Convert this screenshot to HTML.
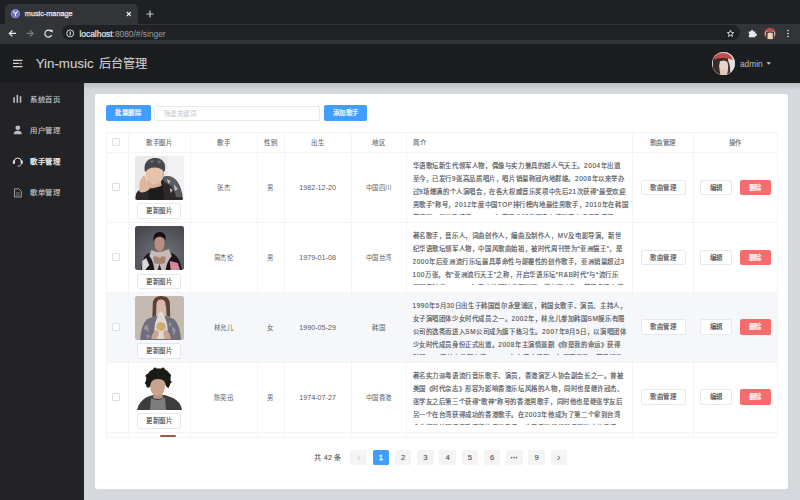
<!DOCTYPE html>
<html lang="zh-CN"><head><meta charset="utf-8">
<style>
*{margin:0;padding:0;box-sizing:border-box}
html,body{width:800px;height:500px;overflow:hidden;background:#d5d9dd;font-family:"Liberation Sans",sans-serif}
.a{position:absolute}
#tabstrip{left:0;top:0;width:800px;height:24px;background:#1f2023}
#tab{left:5px;top:4.4px;width:133px;height:20px;background:#333438;border-radius:5px 5px 0 0}
#toolbar{left:0;top:23.5px;width:800px;height:20.1px;background:#333438}
#omni{left:61.5px;top:25.3px;width:678px;height:15.2px;background:#202124;border-radius:8px}
#hdr{left:0;top:43.6px;width:800px;height:39.4px;background:#1c1d1f}
#side{left:0;top:83px;width:83.7px;height:418px;background:#232325}
#card{left:95px;top:94.3px;width:693.4px;height:394.6px;background:#fff;border-radius:2px}
.btnp{background:#409eff;color:#fff;border-radius:2px;font-size:6.4px;letter-spacing:0.5px;text-align:center;line-height:16px;-webkit-text-stroke:0.2px #fff}
.cell{position:absolute;font-size:6.4px;letter-spacing:0.5px;color:#616367;text-align:center;-webkit-text-stroke:0;white-space:nowrap}
.hl{position:absolute;background:#f3f4f6}
.btnw{position:absolute;border:0.5px solid #e6e8ec;background:#fff;border-radius:2px;font-size:6.4px;letter-spacing:0.5px;-webkit-text-stroke:0.12px #47484c;color:#47484c;text-align:center;line-height:14.5px}
.btnr{position:absolute;background:#f56c6c;border-radius:2px;font-size:6.4px;letter-spacing:0.5px;color:#fff;-webkit-text-stroke:0.2px #fff;text-align:center;line-height:15.4px}
.chk{position:absolute;width:8px;height:8px;border:0.5px solid #dcdfe4;border-radius:1px;background:#fff}
.intro{position:absolute;left:412.5px;width:219px;font-size:6.4px;letter-spacing:0.6px;line-height:12.95px;color:#55575b;overflow:hidden;text-align:left;white-space:nowrap;-webkit-text-stroke:0.15px #55575b}
.pg{position:absolute;top:450.2px;width:16.4px;height:15px;background:#f4f4f5;border-radius:1.5px;font-size:7.7px;color:#505255;text-align:center;line-height:15px;-webkit-text-stroke:0.12px #505255}
.menu{position:absolute;left:30px;line-height:9px;font-size:7.4px;letter-spacing:0.6px;color:#c2c4c8;-webkit-text-stroke:0.15px currentColor}
</style></head><body>
<!-- chrome -->
<div id="tabstrip" class="a"></div>
<div id="tab" class="a"></div>
<div id="toolbar" class="a"></div>
<div id="omni" class="a"></div>
<svg class="a" style="left:0;top:0" width="800" height="44" viewBox="0 0 800 44">
 <circle cx="15.4" cy="13.7" r="4.6" fill="#8a8fd6"/><circle cx="15.4" cy="13.7" r="3.7" fill="#6b6fc0"/>
 <path d="M13.3 11.2 L15.5 13.8 L17.7 11.2 M15.5 13.8 V16.3" stroke="#f0f0ff" stroke-width="1.1" fill="none"/>
 <path d="M126.8 12 L130.8 16 M130.8 12 L126.8 16" stroke="#e8eaed" stroke-width="1.1"/>
 <path d="M150 10.5 V17.5 M146.5 14 H153.5" stroke="#c8cacd" stroke-width="1.2"/>
 <path d="M16 33.4 H9.5 M12.5 30.4 L9.3 33.4 L12.5 36.4" stroke="#e8eaed" stroke-width="1.2" fill="none"/>
 <path d="M26.5 33.4 H33 M30 30.4 L33.2 33.4 L30 36.4" stroke="#7c7e82" stroke-width="1.2" fill="none"/>
 <path d="M51.3 31.6 A3.5 3.5 0 1 0 51.6 35" stroke="#e8eaed" stroke-width="1.2" fill="none"/>
 <path d="M49.6 29.7 L52.6 29.7 L52.6 32.7 Z" fill="#e8eaed"/>
 <circle cx="70.2" cy="33.4" r="3.5" stroke="#e8eaed" stroke-width="0.9" fill="none"/>
 <path d="M70.2 31.6 V35.3" stroke="#e8eaed" stroke-width="1.1"/>
  <path d="M730.5 30.2 L731.4 32.4 L733.7 32.6 L731.9 34.1 L732.5 36.5 L730.5 35.2 L728.5 36.5 L729.1 34.1 L727.3 32.6 L729.6 32.4 Z" stroke="#e8eaed" stroke-width="0.85" fill="none" stroke-linejoin="round"/>
 <path d="M748.8 31.6 H750.9 V31.1 A1.15 1.15 0 0 1 753.2 31.1 V31.6 H755.3 V33.6 H755.8 A1.15 1.15 0 0 1 755.8 35.9 H755.3 V37.3 H748.8 V35.6 A1.1 1.1 0 0 0 748.8 33.6 Z" fill="#e8eaed"/>
 <circle cx="770" cy="33.6" r="6.1" fill="#7d3c3b"/>
 <circle cx="770" cy="33.6" r="5.2" fill="#c8b4ae"/>
 <path d="M765 31.5 Q766 28 770 28 Q774 28 775 31.5 Q770 30 765 31.5Z" fill="#b24a4a"/>
 <path d="M766 32 Q770 30.5 774 32 L774 38 L772.5 38 L772.5 33 L767.5 33 L767.5 38 L766 38Z" fill="#4a3535"/>
 <path d="M768 33 Q770.2 31.8 772.5 33 L772.8 39 L767.8 39Z" fill="#ecd2bb"/>
 <circle cx="788" cy="30.5" r="0.8" fill="#e8eaed"/><circle cx="788" cy="33.5" r="0.8" fill="#e8eaed"/><circle cx="788" cy="36.5" r="0.8" fill="#e8eaed"/>
</svg>
<div class="a" style="left:24.8px;top:8.6px;font-size:7.3px;color:#e8eaed;line-height:10px;-webkit-text-stroke:0.25px #e8eaed">music-manage</div>
<div class="a" style="left:79.5px;top:28.5px;font-size:8.4px;color:#9aa0a6;line-height:10px;white-space:nowrap"><span style="color:#e8eaed;-webkit-text-stroke:0.2px #e8eaed">localhost</span>:8080/#/singer</div>
<!-- header -->
<div id="hdr" class="a"></div>
<svg class="a" style="left:0;top:44px" width="800" height="38" viewBox="0 44 800 38">
 <path d="M13 60.3 H22.5 M13 63.4 H19.3 M13 66.6 H22.5" stroke="#d6d6d6" stroke-width="1.3"/>
 <path d="M20.2 62 L22.4 63.4 L20.2 64.8Z" fill="#a0a0a0"/>
 <path d="M766.5 62.3 H771 L768.75 64.8Z" fill="#c8c8c8"/>
</svg>
<div class="a" style="left:35.7px;top:56.1px;font-size:13.3px;color:#d2d2d2;-webkit-text-stroke:0.1px #d2d2d2;line-height:16px;white-space:nowrap">Yin-music <span style="font-size:12.2px;margin-left:1.8px">后台管理</span></div>
<div class="a" style="left:740px;top:58.5px;font-size:8.3px;color:#bdbdbd;line-height:10px">admin</div>
<svg class="a" style="left:712px;top:52px" width="23" height="23" viewBox="0 0 23 23">
 <defs><clipPath id="av"><circle cx="11.5" cy="11.5" r="11.2"/></clipPath></defs>
 <circle cx="11.5" cy="11.5" r="11.5" fill="#d9d4d2"/>
 <g clip-path="url(#av)">
 <rect width="23" height="23" fill="#cfc8c6"/>
 <rect x="14" y="0" width="9" height="23" fill="#e4dedc"/>
 <path d="M1 8 Q2 3 7 4 L16 5 L16 10 Q14 9 8 9 Q6 16 9 23 L1 23Z" fill="#3b2a2a"/>
 <path d="M15 9 Q17 14 15 23 L18 23 Q19 15 16 8Z" fill="#4a3634"/>
 <path d="M2 7.5 Q3 1 11 1 Q19 1 21 8 Q12 4.5 2 7.5Z" fill="#c44a4c"/>
 <ellipse cx="11.5" cy="13.5" rx="3.8" ry="5" fill="#ead3c2"/>
 <path d="M8.5 18 Q11.5 20 14.5 18 L15 23 L8 23Z" fill="#e2c7b5"/>
 </g>
</svg>
<!-- sidebar -->
<div id="side" class="a"></div>
<svg class="a" style="left:0;top:82px" width="83" height="130" viewBox="0 82 83 130">
 <rect x="13.3" y="97.2" width="1.6" height="5.6" fill="#b9bcc0"/>
 <rect x="16.5" y="94.8" width="1.6" height="8" fill="#b9bcc0"/>
 <rect x="19.7" y="96.2" width="1.6" height="6.6" fill="#b9bcc0"/>
 <circle cx="17.8" cy="127.8" r="2.4" fill="#b9bcc0"/>
 <path d="M13.8 134.2 Q13.8 130.8 17.8 130.8 Q21.8 130.8 21.8 134.2Z" fill="#b9bcc0"/>
  <path d="M14.3 161.5 A3.5 3.5 0 0 1 21.3 161.5" stroke="#e6e6e6" stroke-width="1" fill="none"/>
 <rect x="12.9" y="160.2" width="2" height="3.8" rx="0.8" fill="#e6e6e6"/>
 <rect x="20.7" y="160.2" width="2" height="3.8" rx="0.8" fill="#e6e6e6"/>
 <path d="M21.3 164 Q21 166.2 17.6 166.3" stroke="#e6e6e6" stroke-width="0.8" fill="none"/>
 <path d="M14.5 188.8 H18.8 L21.3 191.3 V197 H14.5Z" stroke="#a9acb0" stroke-width="0.9" fill="none"/>
 <path d="M16 193 H19.8 M16 195 H19.8" stroke="#a9acb0" stroke-width="0.7"/>
</svg>
<div class="menu" style="top:95px">系统首页</div>
<div class="menu" style="top:125.8px">用户管理</div>
<div class="menu" style="top:156.8px;color:#f4f4f4;-webkit-text-stroke:0.25px #f4f4f4">歌手管理</div>
<div class="menu" style="top:188px">歌单管理</div>
<!-- card -->
<div class="a" style="left:83.7px;top:83px;width:717px;height:7px;background:linear-gradient(#b9bdc1,rgba(213,217,221,0))"></div>
<div id="card" class="a"></div>
<div class="a btnp" style="left:105.9px;top:105.2px;width:44.8px;height:15.6px;line-height:15.6px">批量删除</div>
<div class="a" style="left:153.5px;top:105.5px;width:166px;height:15px;border:0.5px solid #e6e8ed;border-radius:2px;background:#fff;font-size:6.4px;letter-spacing:0.5px;color:#c0c4cc;line-height:14px;padding-left:9.3px">筛选关键词</div>
<div class="a btnp" style="left:323.9px;top:105.2px;width:43.6px;height:15.6px;line-height:15.6px">添加歌手</div>
<div class="a" style="left:106px;top:292.6px;width:671px;height:70.0px;background:#f5f7fa"></div>
<div class="hl" style="left:106px;top:131.5px;width:671px;height:1px"></div>
<div class="hl" style="left:106px;top:152.1px;width:671px;height:1px"></div>
<div class="hl" style="left:106px;top:222.3px;width:671px;height:1px"></div>
<div class="hl" style="left:106px;top:292.1px;width:671px;height:1px"></div>
<div class="hl" style="left:106px;top:362.1px;width:671px;height:1px"></div>
<div class="hl" style="left:106px;top:432.1px;width:671px;height:1px"></div>
<div class="hl" style="left:106px;top:436.5px;width:671px;height:1px"></div>
<div class="hl" style="left:105.5px;top:132px;width:1px;height:305px"></div>
<div class="hl" style="left:127.9px;top:132px;width:1px;height:305px"></div>
<div class="hl" style="left:189.5px;top:132px;width:1px;height:305px"></div>
<div class="hl" style="left:256.5px;top:132px;width:1px;height:305px"></div>
<div class="hl" style="left:283.5px;top:132px;width:1px;height:305px"></div>
<div class="hl" style="left:350.7px;top:132px;width:1px;height:305px"></div>
<div class="hl" style="left:406.0px;top:132px;width:1px;height:305px"></div>
<div class="hl" style="left:631.8px;top:132px;width:1px;height:305px"></div>
<div class="hl" style="left:693.1px;top:132px;width:1px;height:305px"></div>
<div class="hl" style="left:776.5px;top:132px;width:1px;height:305px"></div>
<div class="cell" style="left:128.4px;width:61.599999999999994px;top:138.3px;line-height:10px;color:#67696d;-webkit-text-stroke:0.1px #67696d">歌手图片</div>
<div class="cell" style="left:190px;width:67px;top:138.3px;line-height:10px;color:#67696d;-webkit-text-stroke:0.1px #67696d">歌手</div>
<div class="cell" style="left:257px;width:27px;top:138.3px;line-height:10px;color:#67696d;-webkit-text-stroke:0.1px #67696d">性别</div>
<div class="cell" style="left:284px;width:67.19999999999999px;top:138.3px;line-height:10px;color:#67696d;-webkit-text-stroke:0.1px #67696d">出生</div>
<div class="cell" style="left:351.2px;width:55.30000000000001px;top:138.3px;line-height:10px;color:#67696d;-webkit-text-stroke:0.1px #67696d">地区</div>
<div class="cell" style="left:413.0px;top:138.3px;line-height:10px;color:#67696d;-webkit-text-stroke:0.1px #67696d;text-align:left">简介</div>
<div class="cell" style="left:632.3px;width:61.30000000000007px;top:138.3px;line-height:10px;color:#67696d;-webkit-text-stroke:0.1px #67696d">歌曲管理</div>
<div class="cell" style="left:693.6px;width:83.39999999999998px;top:138.3px;line-height:10px;color:#67696d;-webkit-text-stroke:0.1px #67696d">操作</div>
<div class="chk" style="left:112px;top:137.5px"></div>
<div class="chk" style="left:112px;top:183.1px"></div>
<div class="a" style="left:134.8px;top:156.2px;width:49px;height:44px;border-radius:2.5px;overflow:hidden"><svg width="49" height="44" viewBox="0 0 48 44" preserveAspectRatio="none"><defs><filter id="bl1" x="-10%" y="-10%" width="120%" height="120%"><feGaussianBlur stdDeviation="0.7"/></filter></defs><rect width="48" height="44" fill="#e9e9eb"/><g filter="url(#bl1)"><rect x="32" y="0" width="16" height="44" fill="#f1f1f3"/><path d="M0 44 L1 38 Q3 33 9 33 L14 32 L20 30 Q26 26 28 21 Q36 19 41 25 Q46 32 47 44Z" fill="#2e2a2b"/><path d="M27 21 Q35 18 40 24 Q45 31 46 41 L40 41 Q39 33 34 29 Q30 27 28 25Z" fill="#5a5b60"/><path d="M31 23 L35 25 L33 28Z M38 28 L42 33 L39 35Z M34 32 L37 34 L35 37Z" fill="#bdbec2"/><path d="M11 24 L25 24 L26 30 L14 33Z" fill="#d8b198"/><path d="M14 32 Q20 35 27 29 L29 44 L13 44Z" fill="#1c1a1b"/><path d="M10.5 19 Q10.5 11 18.5 11 Q27 11 27 19 Q27 27.5 19.5 28.5 Q12 28 10.5 19Z" fill="#e6c2aa"/><path d="M26.5 15 Q29 16 28.2 20.5 L26.5 21Z" fill="#d9ad94"/><path d="M4.5 36 Q3.5 29 5.5 24 Q7.5 19 10 20 Q11 22 11 25 Q12.5 28 14.5 30 L14 33.5 Q9 37.5 4.5 36Z" fill="#deb69c"/><path d="M9.5 15 Q8 4 18 2 Q28 1 29.5 10 Q30 15 28 16 Q26 11.5 19 11.5 Q13 11.5 10.5 16Z" fill="#47474b"/><path d="M14 5 L19 4 L17 7Z M22 4 L26 6 L23 8Z" fill="#707074"/></g></svg></div>
<div class="btnw" style="left:137.1px;top:203.39999999999998px;width:44.4px;height:15.5px">更新图片</div>
<div class="cell" style="left:190px;width:67px;top:182.7px;line-height:10px;">张杰</div>
<div class="cell" style="left:257px;width:27px;top:182.7px;line-height:10px;">男</div>
<div class="cell" style="left:284px;width:67.19999999999999px;top:182.7px;line-height:10px;font-size:7.2px;letter-spacing:0;-webkit-text-stroke:0;color:#5a5c60;">1982-12-20</div>
<div class="cell" style="left:351.2px;width:55.30000000000001px;top:182.7px;line-height:10px;">中国四川</div>
<div class="intro" style="top:159.7px;height:55.6px"><div>华语歌坛新生代领军人物，偶像与实力兼具的超人气天王。2004年出道</div><div>至今，已发行9张高品质唱片，唱片销量称冠内地群雄。2008年以来举办</div><div>过9场爆满的个人演唱会，在各大权威音乐奖项中先后21次获得“最受欢迎</div><div>男歌手”称号，2012年度中国TOP排行榜内地最佳男歌手，2010年在韩国</div><div>获得亚洲最佳歌手奖，2013年获得全球华语榜中榜最受欢迎男歌手奖</div></div>
<div class="btnw" style="left:641px;top:179.5px;width:44.6px;height:15.4px">歌曲管理</div>
<div class="btnw" style="left:700px;top:179.5px;width:32px;height:15.4px">编辑</div>
<div class="btnr" style="left:739.6px;top:179.5px;width:31px;height:15.4px">删除</div>
<div class="chk" style="left:112px;top:253.10000000000005px"></div>
<div class="a" style="left:134.8px;top:226.4px;width:49px;height:44px;border-radius:2.5px;overflow:hidden"><svg width="49" height="44" viewBox="0 0 48 44" preserveAspectRatio="none"><defs><filter id="bl2" x="-10%" y="-10%" width="120%" height="120%"><feGaussianBlur stdDeviation="0.7"/></filter></defs><defs><radialGradient id="g2" cx="0.55" cy="0.7" r="0.8"><stop offset="0" stop-color="#76767d"/><stop offset="1" stop-color="#46464d"/></radialGradient></defs><rect width="48" height="44" fill="url(#g2)"/><g filter="url(#bl2)"><path d="M6 44 Q7 32 12 28 L19 25 L30 25 L38 28 Q44 32 46 44Z" fill="#1a191d"/><path d="M16 24 Q24 28 33 23 L36 30 Q31 36 30 44 L19 44 Q18 35 14 30Z" fill="#c4bbbb"/><path d="M7 35 L11 32 L14 39 L10 44 L7 44Z M9 38 L12 37 L11 41Z" fill="#d8d6d8"/><path d="M34 35 L42 37 L44 44 L35 44Z" fill="#d58a9b"/><path d="M18 31 Q21 29 24 32 Q27 29 30 31 L29.5 37 Q24 39 18.5 37Z" fill="#a98373"/><path d="M24 38 L26 44 L22 44Z" fill="#2a292c"/><path d="M19 16 Q19 11 24 11 Q29 11 29 16 Q29 24 24 26 Q19 24 19 16Z" fill="#b88e7b"/><path d="M18.5 16 Q17 6 24 6 Q31 6 30 15 Q28.5 10.5 24 10.5 Q19.5 10.5 18.5 16Z" fill="#121114"/></g></svg></div>
<div class="btnw" style="left:137.1px;top:273.6px;width:44.4px;height:15.5px">更新图片</div>
<div class="cell" style="left:190px;width:67px;top:252.70000000000005px;line-height:10px;">周杰伦</div>
<div class="cell" style="left:257px;width:27px;top:252.70000000000005px;line-height:10px;">男</div>
<div class="cell" style="left:284px;width:67.19999999999999px;top:252.70000000000005px;line-height:10px;font-size:7.2px;letter-spacing:0;-webkit-text-stroke:0;color:#5a5c60;">1979-01-08</div>
<div class="cell" style="left:351.2px;width:55.30000000000001px;top:252.70000000000005px;line-height:10px;">中国台湾</div>
<div class="intro" style="top:229.9px;height:55.6px"><div>著名歌手，音乐人，词曲创作人，编曲及制作人，MV及电影导演，新世</div><div>纪华语歌坛领军人物，中国风歌曲始祖，被时代周刊誉为“亚洲猫王”，是</div><div>2000年后亚洲流行乐坛最具革命性与颠覆性的创作歌手，亚洲销量超过3</div><div>100万张，有“亚洲流行天王”之称，开启华语乐坛“R&amp;B时代”与“流行乐</div><div>无国界时代”，2003年登上美国时代周刊亚洲版封面人物，获得多项大奖</div></div>
<div class="btnw" style="left:641px;top:249.50000000000006px;width:44.6px;height:15.4px">歌曲管理</div>
<div class="btnw" style="left:700px;top:249.50000000000006px;width:32px;height:15.4px">编辑</div>
<div class="btnr" style="left:739.6px;top:249.50000000000006px;width:31px;height:15.4px">删除</div>
<div class="chk" style="left:112px;top:323.0px"></div>
<div class="a" style="left:134.8px;top:296.20000000000005px;width:49px;height:44px;border-radius:2.5px;overflow:hidden"><svg width="49" height="44" viewBox="0 0 48 44" preserveAspectRatio="none"><defs><filter id="bl3" x="-10%" y="-10%" width="120%" height="120%"><feGaussianBlur stdDeviation="0.7"/></filter></defs><rect width="48" height="44" fill="#c4baaf"/><g filter="url(#bl3)"><path d="M5 44 Q6 28 12 23 L20 20 L30 20 L38 23 Q44 28 45 44Z" fill="#6f6d7d"/><path d="M8 32 L12 28 L14 36Z M36 30 L40 34 L38 40Z M11 38 L15 40 L12 43Z M33 26 L36 28 L34 31Z" fill="#9996a6"/><path d="M17 21 L17.5 6 Q19 0 25.5 0 Q33 0 34 6 L34.5 21 L31 20 L30.5 10 L21 10 L20.5 20Z" fill="#5a3f34"/><path d="M21 9 Q21 3.5 25.5 3.5 Q30 3.5 30 9 Q30 15.5 25.5 17 Q21 15.5 21 9Z" fill="#d6b9aa"/><path d="M23.5 16.5 Q25.5 15 27.5 16.5 L31 26 Q33 34 31 43 L20 43 Q18 34 20 26Z" fill="#e0d9d0"/><ellipse cx="25.5" cy="30.5" rx="4.6" ry="4.3" fill="#cfaa6e"/><path d="M16 41 Q18 35 21 34 Q24 35 23 39 L21 43 L16 43Z M30 34 Q33 35 35 41 L35 43 L29 43 L28 39Q27 35 30 34Z" fill="#c9a390"/></g></svg></div>
<div class="btnw" style="left:137.1px;top:343.40000000000003px;width:44.4px;height:15.5px">更新图片</div>
<div class="cell" style="left:190px;width:67px;top:322.6px;line-height:10px;">林允儿</div>
<div class="cell" style="left:257px;width:27px;top:322.6px;line-height:10px;">女</div>
<div class="cell" style="left:284px;width:67.19999999999999px;top:322.6px;line-height:10px;font-size:7.2px;letter-spacing:0;-webkit-text-stroke:0;color:#5a5c60;">1990-05-29</div>
<div class="cell" style="left:351.2px;width:55.30000000000001px;top:322.6px;line-height:10px;">韩国</div>
<div class="intro" style="top:299.70000000000005px;height:55.6px"><div>1990年5月30日出生于韩国首尔永登浦区，韩国女歌手、演员、主持人，</div><div>女子演唱团体少女时代成员之一。2002年，林允儿参加韩国SM娱乐有限</div><div>公司的选秀而进入SM公司成为旗下练习生。2007年8月5日，以演唱团体</div><div>少女时代成员身份正式出道。2008年主演情景剧《你是我的命运》获得</div><div>韩国KBS演技大赏新人奖，2009年主演电视剧《乞丐变王子》获得好评</div></div>
<div class="btnw" style="left:641px;top:319.40000000000003px;width:44.6px;height:15.4px">歌曲管理</div>
<div class="btnw" style="left:700px;top:319.40000000000003px;width:32px;height:15.4px">编辑</div>
<div class="btnr" style="left:739.6px;top:319.40000000000003px;width:31px;height:15.4px">删除</div>
<div class="chk" style="left:112px;top:393.0px"></div>
<div class="a" style="left:134.8px;top:366.20000000000005px;width:49px;height:44px;border-radius:2.5px;overflow:hidden"><svg width="48" height="44" viewBox="0 0 48 44"><defs><filter id="bl4" x="-10%" y="-10%" width="120%" height="120%"><feGaussianBlur stdDeviation="0.7"/></filter></defs><rect width="48" height="44" fill="#fdfdfd"/><g filter="url(#bl4)"><path d="M2 44 Q4 35 12 31 L18 29 L30 29 L38 32 Q46 36 47 44Z" fill="#3c3c3e"/><path d="M16 32 Q23 36 30 31.5 L31 44 L15 44Z" fill="#7e7c7c"/><path d="M19 25 L27 25 L28 32 Q23 34 18 32Z" fill="#b8937e"/><path d="M15 19 Q15 11 22.5 11 Q30 11 30 19 Q30 29 22.5 30 Q15 29 15 19Z" fill="#c9a38c"/><path d="M11.5 21 Q10 16 11.5 11 Q13 5 18 3.5 Q21 2 25 2.5 Q30 2.5 33 5.5 Q36 9 35.5 14 Q35.5 19 33.5 22 Q31.5 22 30.5 19 Q30 14.5 26.5 13.5 Q22 12.5 18.5 14 Q15.5 15.5 15.3 20 Q13.5 23 11.5 21Z" fill="#1d1a19"/><circle cx="12.5" cy="10" r="2" fill="#1d1a19"/><circle cx="34" cy="9.5" r="2" fill="#1d1a19"/><circle cx="20" cy="3.2" r="1.8" fill="#1d1a19"/><circle cx="28" cy="3.2" r="1.8" fill="#1d1a19"/><circle cx="11.5" cy="17" r="1.6" fill="#1d1a19"/><circle cx="35" cy="16" r="1.6" fill="#1d1a19"/></g></svg></div>
<div class="btnw" style="left:137.1px;top:413.40000000000003px;width:44.4px;height:15.5px">更新图片</div>
<div class="cell" style="left:190px;width:67px;top:392.6px;line-height:10px;">陈奕迅</div>
<div class="cell" style="left:257px;width:27px;top:392.6px;line-height:10px;">男</div>
<div class="cell" style="left:284px;width:67.19999999999999px;top:392.6px;line-height:10px;font-size:7.2px;letter-spacing:0;-webkit-text-stroke:0;color:#5a5c60;">1974-07-27</div>
<div class="cell" style="left:351.2px;width:55.30000000000001px;top:392.6px;line-height:10px;">中国香港</div>
<div class="intro" style="top:369.70000000000005px;height:55.6px"><div>著名实力派粤语流行音乐歌手、演员，香港演艺人协会副会长之一。曾被</div><div>美国《时代杂志》形容为影响香港乐坛风格的人物，同时也是继许冠杰、</div><div>张学友之后第三个获得“歌神”称号的香港男歌手，同时他也是继张学友后</div><div>另一个在台湾获得成功的香港歌手。在2003年他成为了第二个拿到台湾</div><div>金曲奖最佳国语男歌手奖的香港歌手，也是香港乐坛最具影响力的歌手</div></div>
<div class="btnw" style="left:641px;top:389.40000000000003px;width:44.6px;height:15.4px">歌曲管理</div>
<div class="btnw" style="left:700px;top:389.40000000000003px;width:32px;height:15.4px">编辑</div>
<div class="btnr" style="left:739.6px;top:389.40000000000003px;width:31px;height:15.4px">删除</div>
<div class="a" style="left:160px;top:435.0px;width:16px;height:1.6999999999999773px;background:#a35a48;border-radius:1px"></div>
<div class="a" style="left:314.2px;top:453.4px;font-size:7.2px;letter-spacing:0.25px;color:#55575b;line-height:10px;white-space:pre;-webkit-text-stroke:0.15px #55575b">共 42 条</div>
<div class="pg" style="left:350.40000000000003px;color:#c0c4cc;font-size:10px;-webkit-text-stroke:0;">‹</div>
<div class="pg" style="left:372.8px;background:#409eff;color:#fff;-webkit-text-stroke:0.3px #fff;">1</div>
<div class="pg" style="left:395.0px;">2</div>
<div class="pg" style="left:417.3px;">3</div>
<div class="pg" style="left:439.40000000000003px;">4</div>
<div class="pg" style="left:461.6px;">5</div>
<div class="pg" style="left:483.90000000000003px;">6</div>
<div class="pg" style="left:506.2px"><svg width="16" height="15" style="position:absolute;left:0;top:0"><circle cx="5.6" cy="7.6" r="0.8" fill="#55575b"/><circle cx="8" cy="7.6" r="0.8" fill="#55575b"/><circle cx="10.4" cy="7.6" r="0.8" fill="#55575b"/></svg></div>
<div class="pg" style="left:528.4px;">9</div>
<div class="pg" style="left:550.5999999999999px;color:#606266;font-size:10px;-webkit-text-stroke:0;">›</div>
</body></html>
